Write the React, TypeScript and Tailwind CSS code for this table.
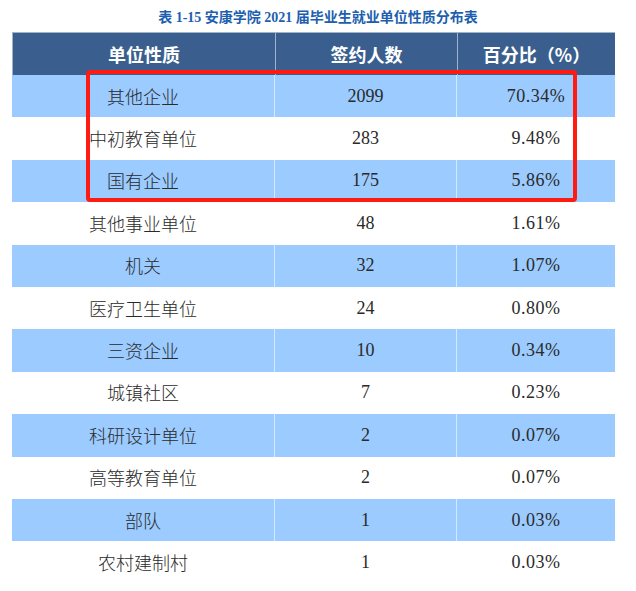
import React from "react";

const rows: [string, string, string][] = [
  ["其他企业", "2099", "70.34%"],
  ["中初教育单位", "283", "9.48%"],
  ["国有企业", "175", "5.86%"],
  ["其他事业单位", "48", "1.61%"],
  ["机关", "32", "1.07%"],
  ["医疗卫生单位", "24", "0.80%"],
  ["三资企业", "10", "0.34%"],
  ["城镇社区", "7", "0.23%"],
  ["科研设计单位", "2", "0.07%"],
  ["高等教育单位", "2", "0.07%"],
  ["部队", "1", "0.03%"],
  ["农村建制村", "1", "0.03%"],
];

const serif = { fontFamily: '"Liberation Serif", "Noto Sans CJK SC", serif' };

export default function App() {
  return (
    <div className="relative w-[636px] h-[591px] bg-white">
      <div
        className="h-[32px] flex items-center justify-center pt-[2px] text-[14px] font-bold text-[#1d5fae]"
        style={{ fontFamily: '"Liberation Serif", "Noto Sans CJK SC", sans-serif' }}
      >
        表 1-15 安康学院 2021 届毕业生就业单位性质分布表
      </div>
      <div className="ml-[12px] w-[603px]">
        <div
          className="flex h-[43px] bg-[#3a5f8e] text-white font-bold text-[18px] border-t border-l border-[#9fb3cb]"
          style={{ fontFamily: '"Noto Sans CJK SC", sans-serif' }}
        >
          <div className="w-[263px] flex items-center justify-center border-r border-[#9fb3cb]">单位性质</div>
          <div className="w-[182px] flex items-center justify-center border-r border-[#9fb3cb]">签约人数</div>
          <div className="flex-1 flex items-center justify-center">百分比（%）</div>
        </div>
        {rows.map((r, i) => {
          const blue = i % 2 === 0;
          return (
            <div
              key={i}
              className={`flex h-[42.4px] text-[18px] text-[#2a2a2a] ${blue ? "bg-[#9bcbff]" : "bg-white"}`}
            >
              <div
                className={`w-[263px] flex items-center justify-center border-r ${blue ? "border-[#d6eaff]" : "border-white"}`}
                style={{ fontFamily: '"Noto Sans CJK SC", sans-serif', fontWeight: 300 }}
              >
                {r[0]}
              </div>
              <div
                className={`w-[182px] flex items-center justify-center border-r ${blue ? "border-[#d6eaff]" : "border-white"}`}
                style={serif}
              >
                {r[1]}
              </div>
              <div className="flex-1 flex items-center justify-center tracking-[0.5px]" style={serif}>
                {r[2]}
              </div>
            </div>
          );
        })}
      </div>
      <div className="absolute left-[86px] top-[70px] w-[491px] h-[132px] border-[4px] border-[#ff1a12] rounded-[4px]" />
    </div>
  );
}
